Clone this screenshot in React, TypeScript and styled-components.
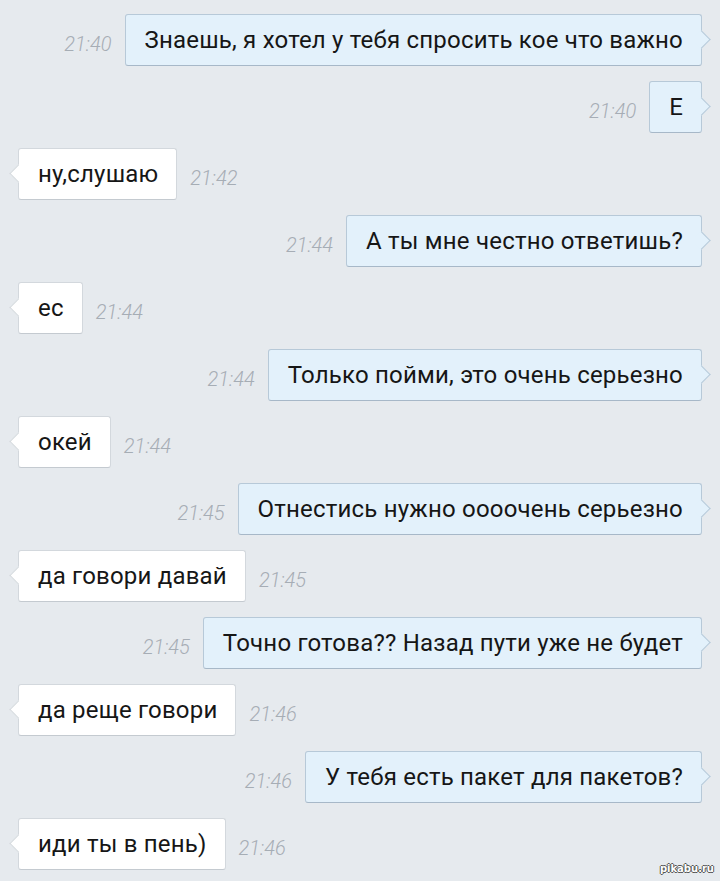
import React from "react";
import styled, { createGlobalStyle, css } from "styled-components";

const Global = createGlobalStyle`
  html, body { margin: 0; padding: 0; background: #e6eaee; }
  body { width: 720px; height: 881px; overflow: hidden; font-family: Roboto, "Noto Sans", sans-serif; }
`;

const Page = styled.div`
  position: relative;
  width: 720px;
  height: 881px;
  overflow: hidden;
  background: #e6eaee;
`;

const List = styled.div`
  display: flex;
  flex-direction: column;
  gap: 15px;
  margin-top: -53px;
  padding: 0 18px;
`;

const Row = styled.div<{ $out: boolean }>`
  display: flex;
  align-items: center;
  gap: 13px;
  justify-content: ${(p) => (p.$out ? "flex-end" : "flex-start")};
`;

const Bubble = styled.div<{ $out: boolean }>`
  position: relative;
  box-sizing: border-box;
  height: 52px;
  display: flex;
  align-items: center;
  padding: 0 18px 0 19px;
  border-radius: 3px;
  font-size: 24px;
  color: #161616;
  white-space: nowrap;
  letter-spacing: 0.2px;
  ${(p) =>
    p.$out
      ? css`
          background: #e3f1fb;
          border: 1px solid #b7c9d8;
          border-bottom-color: #a7b8c8;
        `
      : css`
          background: #ffffff;
          border: 1px solid #d3d8dd;
          border-bottom-color: #c4cad0;
        `}
  &::after {
    content: "";
    position: absolute;
    top: 18px;
    width: 12px;
    height: 12px;
    transform: rotate(45deg);
    ${(p) =>
      p.$out
        ? css`
            right: -7px;
            background: #e3f1fb;
            border-top: 1px solid #b7c9d8;
            border-right: 1px solid #b7c9d8;
          `
        : css`
            left: -7px;
            background: #ffffff;
            border-bottom: 1px solid #d3d8dd;
            border-left: 1px solid #d3d8dd;
          `}
  }
`;

const Time = styled.span`
  font-size: 20px;
  font-style: italic;
  font-weight: 300;
  color: #a6adb5;
  padding-top: 8px;
`;

const Watermark = styled.div`
  position: absolute;
  right: 6px;
  bottom: 7px;
  font-family: "DejaVu Sans", sans-serif;
  font-size: 10px;
  font-weight: bold;
  color: #ffffff;
  text-shadow: -1px 0 #555, 1px 0 #555, 0 -1px #555, 0 1px #555;
`;

type Msg = { out: boolean; text: string; time: string; width?: number };

const messages: Msg[] = [
  { out: true, text: "", time: "21:40", width: 610 },
  { out: true, text: "Знаешь, я хотел у тебя спросить кое что важно", time: "21:40" },
  { out: true, text: "Е", time: "21:40" },
  { out: false, text: "ну,слушаю", time: "21:42" },
  { out: true, text: "А ты мне честно ответишь?", time: "21:44" },
  { out: false, text: "ес", time: "21:44" },
  { out: true, text: "Только пойми, это очень серьезно", time: "21:44" },
  { out: false, text: "окей", time: "21:44" },
  { out: true, text: "Отнестись нужно оооочень серьезно", time: "21:45" },
  { out: false, text: "да говори давай", time: "21:45" },
  { out: true, text: "Точно готова?? Назад пути уже не будет", time: "21:45" },
  { out: false, text: "да реще говори", time: "21:46" },
  { out: true, text: "У тебя есть пакет для пакетов?", time: "21:46" },
  { out: false, text: "иди ты в пень)", time: "21:46" },
];

export default function App() {
  return (
    <Page>
      <Global />
      <List>
        {messages.map((m, i) => (
          <Row key={i} $out={m.out}>
            {m.out && m.text && <Time>{m.time}</Time>}
            <Bubble $out={m.out} style={m.width ? { width: m.width } : undefined}>
              {m.text}
            </Bubble>
            {!m.out && <Time>{m.time}</Time>}
          </Row>
        ))}
      </List>
      <Watermark>pikabu.ru</Watermark>
    </Page>
  );
}
